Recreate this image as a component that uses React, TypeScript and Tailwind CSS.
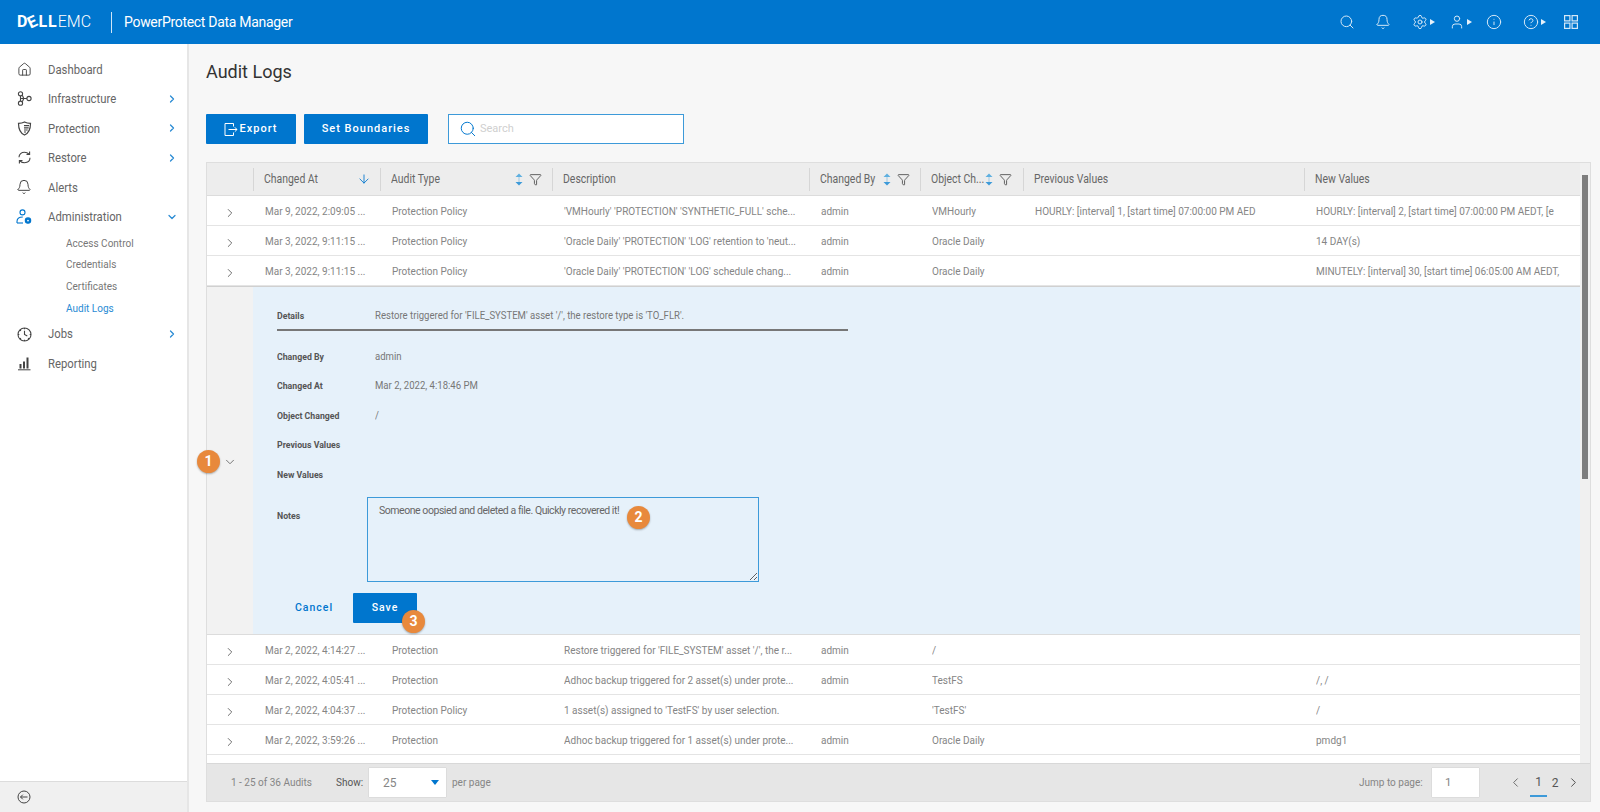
import React from "react";
import { Search, Bell, Settings, User, Info, CircleHelp, ChevronRight, ChevronDown, ChevronLeft, ArrowDown, Funnel, House } from "lucide-react";

const GRID = "grid grid-cols-[46px_127px_172px_257px_111px_103px_281px_1fr]";

function C({ children, className = "" }: { children?: React.ReactNode; className?: string }) {
  return <span className={`block w-max origin-left scale-x-[0.87] whitespace-nowrap ${className}`}>{children}</span>;
}

function Caret() {
  return <span className="ml-[2px] h-0 w-0 border-y-[3px] border-l-[5px] border-y-transparent border-l-[#e6f1fa]" />;
}

function InfraIcon() {
  return (
    <svg width="15" height="15" viewBox="0 0 15 15" fill="none" stroke="#444" strokeWidth="1.100">
      <circle cx="3.500" cy="2.800" r="2.100" /><circle cx="3.500" cy="12.200" r="2.100" /><circle cx="12" cy="7.500" r="2.100" />
      <path d="M3.500 4.900v5.200M4 7.500h5.900M5.300 4.200l1.500 3.300-1.500 3.300" />
    </svg>
  );
}
function ShieldIcon() {
  return (
    <svg width="15" height="15" viewBox="0 0 15 15" fill="none" stroke="#444" strokeWidth="1.200">
      <path d="M7.500 1C9.300 2 11.500 2.400 13.500 2.400c0 5-1 9.300-6 11.600C2.500 11.700 1.500 7.400 1.500 2.400 3.500 2.400 5.700 2 7.500 1z" />
      <path d="M7 4.600h5M7 6.800h4.700M7 9h3.700M7 11h2" />
    </svg>
  );
}
function RestoreIcon() {
  return (
    <svg width="15" height="15" viewBox="0 0 15 15" fill="none" stroke="#444" strokeWidth="1.100">
      <path d="M2 7.200C2 4 4.500 2.300 7.500 2.300c1.700 0 3.200.6 4.400 1.700M13 7.800c0 3.200-2.500 4.900-5.500 4.900-1.700 0-3.200-.6-4.400-1.700" />
      <path d="M12.600 1.400v3.100H9.500M2.400 13.600v-3.100h3.100" />
    </svg>
  );
}
function AdminIcon() {
  return (
    <svg width="16" height="16" viewBox="0 0 16 16" fill="none" stroke="#0076ce" strokeWidth="1.100">
      <circle cx="6.500" cy="3.400" r="2.500" />
      <path d="M1 14v-1.500C1 9.800 3.200 8 6.800 8" />
      <path d="M1 14h6" />
      <circle cx="12" cy="11.600" r="2.700" fill="#0076ce" />
      <circle cx="12" cy="11.600" r="0.900" fill="#fff" stroke="none" />
    </svg>
  );
}
function JobsIcon() {
  return (
    <svg width="15" height="15" viewBox="0 0 15 15" fill="none" stroke="#444" strokeWidth="1.100">
      <circle cx="7.500" cy="7.500" r="6.500" />
      <path d="M7.500 3.800v3.700l2.800 1.500" />
      <path d="M7.500 1v1.300M7.500 12.700V14M1 7.500h1.300M12.700 7.500H14M3 3l.9.9M11.100 11.100l.9.9M3 12l.9-.9" />
    </svg>
  );
}
function ReportIcon() {
  return (
    <svg width="15" height="15" viewBox="0 0 15 15" fill="#444">
      <rect x="2.500" y="8" width="2" height="4.500" /><rect x="6" y="5.500" width="2" height="7" /><rect x="9.500" y="1.500" width="2" height="11" /><rect x="1" y="13.300" width="12.500" height="1" />
    </svg>
  );
}
function ExportIcon() {
  return (
    <svg width="15" height="15" viewBox="0 0 15 15" fill="none" stroke="#fff" strokeWidth="1">
      <path d="M10.500 4.500V1.500h-8.500v12h8.500v-3M5.500 7.500H14M11.800 5.300l2.200 2.200-2.200 2.200" />
    </svg>
  );
}
function GridIcon() {
  return (
    <svg width="14" height="14" viewBox="0 0 14 14" fill="none" stroke="#d5e8f7" strokeWidth="1.200">
      <rect x="0.600" y="0.600" width="5.300" height="5.300" /><rect x="8.100" y="0.600" width="5.300" height="5.300" />
      <rect x="0.600" y="8.100" width="5.300" height="5.300" /><rect x="8.100" y="8.100" width="5.300" height="5.300" />
    </svg>
  );
}
function SortIcon() {
  return (
    <svg width="8" height="13" viewBox="0 0 8 13" fill="#5fb0e0">
      <path d="M4 0.500L7.500 4H.5z" /><path d="M4 12.500L.5 9h7z" fill="#3d9ad9" /><rect x="3.500" y="4" width="1" height="5" fill="#9cc9e6" />
    </svg>
  );
}

function NavItem({ icon, label, chevron, open }: { icon: React.ReactNode; label: string; chevron?: boolean; open?: boolean }) {
  return (
    <div className="flex h-[29.500px] items-center pl-[16px] pr-[9px]">
      <span className="flex w-[16px] justify-center">{icon}</span>
      <span className="ml-[16px] flex-1 text-[13px] text-[#666]"><C>{label}</C></span>
      {chevron && (open ? <ChevronDown size={12} strokeWidth={2.500} color="#2a8bd4" /> : <ChevronRight size={12} strokeWidth={2.500} color="#2a8bd4" />)}
    </div>
  );
}

function Sidebar() {
  return (
    <aside className="flex w-[189px] shrink-0 flex-col border-r-2 border-[#e6e6e6] bg-white">
      <nav className="flex-1 pt-[10.500px]">
        <NavItem icon={<House size={15} strokeWidth={1.500} color="#444" />} label="Dashboard" />
        <NavItem icon={<InfraIcon />} label="Infrastructure" chevron />
        <NavItem icon={<ShieldIcon />} label="Protection" chevron />
        <NavItem icon={<RestoreIcon />} label="Restore" chevron />
        <NavItem icon={<Bell size={16} strokeWidth={1.500} color="#444" />} label="Alerts" />
        <NavItem icon={<AdminIcon />} label="Administration" chevron open />
        <div className="flex flex-col pl-[66px] pt-[1px] text-[11.500px] leading-[21.700px] text-[#777]">
          <C>Access Control</C>
          <C>Credentials</C>
          <C>Certificates</C>
          <C className="text-[#2a8bd4]">Audit Logs</C>
        </div>
        <NavItem icon={<JobsIcon />} label="Jobs" chevron />
        <NavItem icon={<ReportIcon />} label="Reporting" />
      </nav>
      <div className="flex h-[31px] items-center border-t border-[#dcdcdc] bg-[#f0f0f0] pl-[17px]">
        <svg width="14" height="14" viewBox="0 0 14 14" fill="none" stroke="#444" strokeWidth="1"><circle cx="7" cy="7" r="6" /><path d="M10.500 7h-7M5.800 4.700L3.500 7l2.300 2.300" /></svg>
      </div>
    </aside>
  );
}

function HeaderCell({ label, sort, filter, sorted, pr = "pr-[13px]" }: { label: string; sort?: boolean; filter?: boolean; sorted?: boolean; pr?: string }) {
  return (
    <div className={`flex h-[23px] items-center justify-between border-l border-[#d6d6d6] pl-[10px] ${pr}`}>
      <span className="min-w-0 flex-1 text-[12px] text-[#666]"><C>{label}</C></span>
      <span className="flex shrink-0 items-center gap-[6px]">
        {sorted && <ArrowDown size={14} strokeWidth={1.500} color="#0076ce" />}
        {sort && <SortIcon />}
        {filter && <Funnel size={13} strokeWidth={1.700} color="#555" />}
      </span>
    </div>
  );
}

function Row({ cells }: { cells: string[] }) {
  return (
    <div className={`${GRID} h-[30px] shrink-0 items-center border-b border-[#e4e4e4] bg-white text-[11.500px] text-[#858585]`}>
      <span className="flex justify-center pt-[4px]"><ChevronRight size={14} strokeWidth={1.600} color="#666" /></span>
      {cells.map((c, i) => (
        <span key={i} className="pl-[12px] pt-[3px]"><C>{c}</C></span>
      ))}
    </div>
  );
}

function Field({ label, value }: { label: string; value?: string }) {
  return (
    <div className="flex h-[29.500px] items-center">
      <span className="w-[98px] text-[9.500px] font-bold text-[#555]"><C className="scale-x-[0.92]">{label}</C></span>
      <span className="text-[11px] text-[#777]"><C>{value}</C></span>
    </div>
  );
}

function Badge({ n, className }: { n: number; className: string }) {
  return (
    <span className={`absolute flex h-[23px] w-[23px] items-center justify-center rounded-full bg-[#e8893c] text-[14px] font-bold text-white shadow-[0_1px_2px_rgba(0,0,0,0.3)] ${className}`}>{n}</span>
  );
}

const top = [
  ["Mar 9, 2022, 2:09:05 ...", "Protection Policy", "'VMHourly' 'PROTECTION' 'SYNTHETIC_FULL' sche...", "admin", "VMHourly", "HOURLY: [interval] 1, [start time] 07:00:00 PM AED", "HOURLY: [interval] 2, [start time] 07:00:00 PM AEDT, [e"],
  ["Mar 3, 2022, 9:11:15 ...", "Protection Policy", "'Oracle Daily' 'PROTECTION' 'LOG' retention to 'neut...", "admin", "Oracle Daily", "", "14 DAY(s)"],
  ["Mar 3, 2022, 9:11:15 ...", "Protection Policy", "'Oracle Daily' 'PROTECTION' 'LOG' schedule chang...", "admin", "Oracle Daily", "", "MINUTELY: [interval] 30, [start time] 06:05:00 AM AEDT,"],
];
const bottom = [
  ["Mar 2, 2022, 4:14:27 ...", "Protection", "Restore triggered for 'FILE_SYSTEM' asset '/', the r...", "admin", "/", "", ""],
  ["Mar 2, 2022, 4:05:41 ...", "Protection", "Adhoc backup triggered for 2 asset(s) under prote...", "admin", "TestFS", "", "/, /"],
  ["Mar 2, 2022, 4:04:37 ...", "Protection Policy", "1 asset(s) assigned to 'TestFS' by user selection.", "", "'TestFS'", "", "/"],
  ["Mar 2, 2022, 3:59:26 ...", "Protection", "Adhoc backup triggered for 1 asset(s) under prote...", "admin", "Oracle Daily", "", "pmdg1"],
];

export default function App() {
  return (
    <div className="relative flex h-[812px] w-[1600px] flex-col overflow-hidden bg-[#f7f7f7] font-['Roboto',sans-serif]">
      <header className="flex h-[44px] shrink-0 items-center bg-[#0076ce] pl-[17px] text-white">
        <span className="flex w-[76px] items-baseline whitespace-nowrap text-[16px] leading-none">
          <span className="font-bold tracking-[1px]">D<span className="inline-block -rotate-[25deg]">E</span>LL</span>
          <span className="font-light">EMC</span>
        </span>
        <span className="ml-[18px] h-[21px] w-px bg-[#cfe5f7]" />
        <span className="ml-[12px] flex-1 text-[14px] tracking-[-0.3px]">PowerProtect Data Manager</span>
        <div className="flex items-center pr-[22px] text-[#d5e8f7]">
          <Search size={16} strokeWidth={1.500} />
          <Bell size={16} strokeWidth={1.500} className="ml-[20px]" />
          <span className="ml-[21px] flex items-center"><Settings size={16} strokeWidth={1.500} /><Caret /></span>
          <span className="ml-[14px] flex items-center"><User size={16} strokeWidth={1.500} /><Caret /></span>
          <Info size={16} strokeWidth={1.500} className="ml-[14px]" />
          <span className="ml-[21px] flex items-center"><CircleHelp size={16} strokeWidth={1.500} /><Caret /></span>
          <span className="ml-[18px]"><GridIcon /></span>
        </div>
      </header>

      <div className="flex min-h-0 flex-1">
        <Sidebar />
        <main className="flex min-w-0 flex-1 flex-col pb-[10px] pl-[17px] pr-[9px]">
          <h1 className="mt-[16px] text-[18px] leading-[24px] text-[#333]">Audit Logs</h1>
          <div className="mt-[30px] flex h-[30px] shrink-0 items-center">
            <button className="flex h-full w-[90px] items-center justify-center gap-[2px] rounded-[1px] bg-[#0076ce] pr-[2px] text-[11px] font-medium tracking-[1px] text-white">
              <ExportIcon /> Export
            </button>
            <button className="ml-[8px] h-full w-[124px] rounded-[1px] bg-[#0076ce] text-[11px] font-medium tracking-[1px] text-white">Set Boundaries</button>
            <div className="ml-[20px] flex h-full w-[236px] items-center gap-[3px] border border-[#3d9ad9] bg-white pl-[10px]">
              <Search size={18} strokeWidth={1.300} color="#0076ce" />
              <span className="text-[11px] text-[#cfcfcf]">Search</span>
            </div>
          </div>

          <section className="mt-[18px] flex min-h-0 flex-1 flex-col border border-[#dedede] bg-[#f0f0f0]">
            <div className="flex min-h-0 flex-1">
              <div className="flex min-w-0 flex-1 flex-col overflow-hidden">
                <div className={`${GRID} h-[33px] shrink-0 items-center border-b border-[#dcdcdc] bg-[#ededed]`}>
                  <span />
                  <HeaderCell label="Changed At" sorted pr="pr-[9px]" />
                  <HeaderCell label="Audit Type" sort filter pr="pr-[10px]" />
                  <HeaderCell label="Description" />
                  <HeaderCell label="Changed By" sort filter pr="pr-[10px]" />
                  <HeaderCell label="Object Ch..." sort filter pr="pr-[11px]" />
                  <HeaderCell label="Previous Values" />
                  <HeaderCell label="New Values" />
                </div>
                {top.map((c, i) => <Row key={i} cells={c} />)}
                <div className="flex h-[349px] shrink-0 border-b border-t border-b-[#dcdcdc] border-t-[#d0d0d0] bg-[#f2f2f2]">
                  <div className="flex w-[46px] shrink-0 items-center justify-center pt-[2px]">
                    <ChevronDown size={14} strokeWidth={1.500} color="#666" />
                  </div>
                  <div className="flex-1 bg-[#e6f1fa] pl-[24px] pt-[16px]">
                    <div className="flex h-[28px] w-[571px] items-center border-b-2 border-[#777]">
                      <span className="w-[98px] text-[9.500px] font-bold text-[#555]"><C className="scale-x-[0.92]">Details</C></span>
                      <span className="text-[11px] text-[#777]"><C>Restore triggered for 'FILE_SYSTEM' asset '/', the restore type is 'TO_FLR'.</C></span>
                    </div>
                    <div className="mt-[11px]">
                      <Field label="Changed By" value="admin" />
                      <Field label="Changed At" value="Mar 2, 2022, 4:18:46 PM" />
                      <Field label="Object Changed" value="/" />
                      <Field label="Previous Values" />
                      <Field label="New Values" />
                    </div>
                    <div className="mt-[7px] flex">
                      <span className="mt-[12px] w-[90px] text-[9.500px] font-bold text-[#555]"><C className="scale-x-[0.92]">Notes</C></span>
                      <textarea
                        readOnly
                        defaultValue="Someone oopsied and deleted a file. Quickly recovered it!"
                        className="h-[85px] w-[392px] resize border border-[#3d9ad9] bg-transparent px-[11px] py-[5px] text-[10.500px] tracking-[-0.45px] text-[#666] outline-none"
                      />
                    </div>
                    <div className="ml-[18px] mt-[11px] flex h-[30px] items-center">
                      <span className="w-[58px] text-[10.500px] font-medium tracking-[1px] text-[#0076ce]">Cancel</span>
                      <button className="h-full w-[64px] rounded-[1px] bg-[#0076ce] text-[10.500px] font-medium tracking-[1px] text-white">Save</button>
                    </div>
                  </div>
                </div>
                {bottom.map((c, i) => <Row key={i} cells={c} />)}
                <div className="flex-1 bg-white" />
              </div>
              <div className="w-[10px] shrink-0 bg-[#f0f0f0] pl-[2px] pt-[12px]">
                <div className="h-[304px] w-[6px] bg-[#7d7d7d]" />
              </div>
            </div>
            <footer className="flex h-[38px] shrink-0 items-center border-t border-[#d8d8d8] bg-[#e6e6e6] pl-[24px] pr-[9px] text-[11.500px] text-[#858585]">
              <span className="w-[105px]"><C>1 - 25 of 36 Audits</C></span>
              <span className="w-[33px] text-[#555]"><C>Show:</C></span>
              <div className="flex h-[29px] w-[77px] items-center justify-between bg-white pl-[14px] pr-[7px] shadow-[0_0_1px_rgba(0,0,0,0.25)]">
                <span className="text-[12px]">25</span>
                <span className="h-0 w-0 border-x-[4px] border-t-[5px] border-x-transparent border-t-[#0076ce]" />
              </div>
              <span className="ml-[6px]"><C>per page</C></span>
              <span className="ml-auto w-[73px]"><C>Jump to page:</C></span>
              <div className="flex h-[29px] w-[47px] items-center bg-white pl-[13px] shadow-[0_0_1px_rgba(0,0,0,0.25)]">1</div>
              <ChevronLeft size={15} strokeWidth={1.500} color="#666" className="ml-[29px]" />
              <span className="ml-[7px] flex h-[29px] w-[17px] items-center justify-center border-b-2 border-[#3d9ad9] text-[12px] text-[#555]">1</span>
              <span className="ml-[2px] w-[12px] text-center text-[12px] text-[#555]">2</span>
              <ChevronRight size={15} strokeWidth={1.500} color="#444" className="ml-[5px]" />
            </footer>
          </section>
        </main>
      </div>

      <Badge n={1} className="left-[197px] top-[450px]" />
      <Badge n={2} className="left-[627px] top-[506px]" />
      <Badge n={3} className="left-[402px] top-[610px]" />
    </div>
  );
}
